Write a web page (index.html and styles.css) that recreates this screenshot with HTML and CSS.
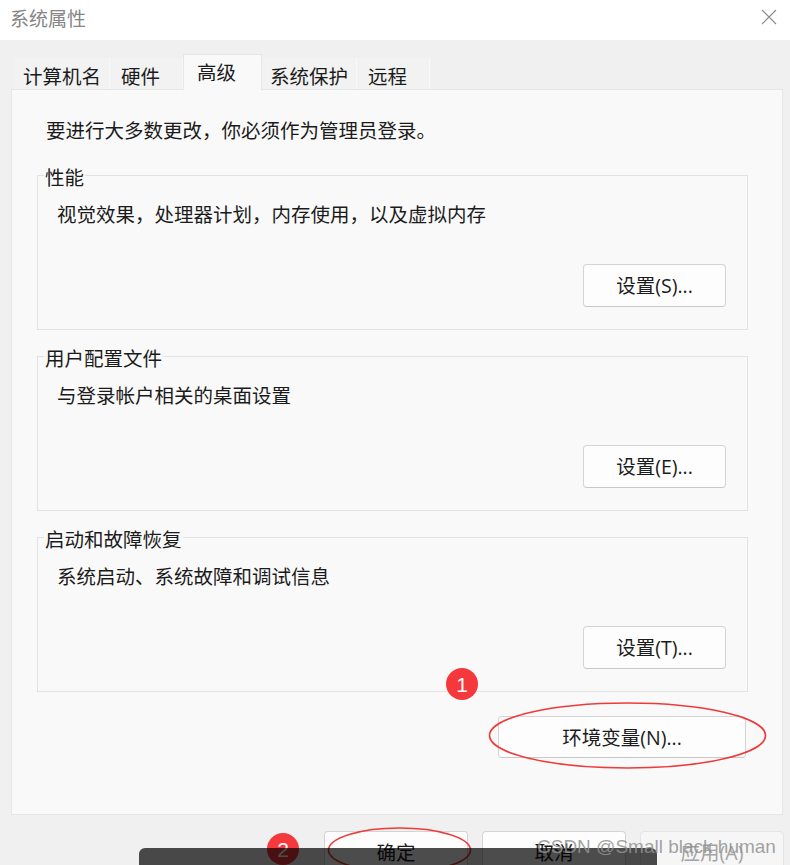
FILE: index.html
```html
<!DOCTYPE html>
<html lang="zh-CN">
<head>
    <meta charset="UTF-8">
    <meta name="viewport" content="width=device-width, initial-scale=1.0">
    <title>系统属性</title>
    <link rel="stylesheet" href="styles.css">
</head>
<body>
    <div class="window">
        <div class="titlebar">
            <span class="title">系统属性</span>
            <svg class="close" width="16" height="16" viewBox="0 0 16 16">
                <path d="M1 1 L15 15 M15 1 L1 15" stroke="#8a8a8a" stroke-width="1.1" fill="none"/>
            </svg>
        </div>

        <div class="tabs">
            <div class="tab">计算机名</div>
            <div class="tab">硬件</div>
            <div class="tab active">高级</div>
            <div class="tab">系统保护</div>
            <div class="tab">远程</div>
        </div>

        <div class="panel">
            <p class="intro">要进行大多数更改，你必须作为管理员登录。</p>

            <div class="groups">
                <fieldset class="group">
                    <legend>性能</legend>
                    <p class="desc">视觉效果，处理器计划，内存使用，以及虚拟内存</p>
                    <div class="actions"><button class="btn">设置(S)...</button></div>
                </fieldset>

                <fieldset class="group">
                    <legend>用户配置文件</legend>
                    <p class="desc">与登录帐户相关的桌面设置</p>
                    <div class="actions"><button class="btn">设置(E)...</button></div>
                </fieldset>

                <fieldset class="group">
                    <legend>启动和故障恢复</legend>
                    <p class="desc">系统启动、系统故障和调试信息</p>
                    <div class="actions"><button class="btn">设置(T)...</button></div>
                </fieldset>

                <div class="env-row">
                    <button class="btn btn-env">环境变量(N)...</button>
                </div>
            </div>
        </div>

        <div class="footer">
            <button class="btn btn-footer">确定</button>
            <button class="btn btn-footer">取消</button>
            <button class="btn btn-footer disabled">应用(A)</button>
        </div>
    </div>

    <!-- red annotations drawn over the dialog -->
    <svg class="marks" width="790" height="865" viewBox="0 0 790 865">
        <ellipse cx="627.5" cy="735.5" rx="138" ry="32.5" fill="none" stroke="#ef3a3a" stroke-width="1.6"/>
        <ellipse cx="399.5" cy="850" rx="71" ry="22" fill="none" stroke="#ef3a3a" stroke-width="1.6"/>
        <circle cx="462" cy="684" r="16" fill="#f5383b"/>
        <text x="462" y="691.5" class="badge-num">1</text>
        <circle cx="283" cy="849" r="16" fill="#f5383b"/>
        <text x="283" y="856.5" class="badge-num">2</text>
    </svg>

    <div class="shade"></div>
    <div class="watermark">CSDN @Small black human</div>
</body>
</html>
```

FILE: styles.css
```css
body {
    margin: 0;
    width: 790px;
    height: 865px;
    overflow: hidden;
    background-color: #f0f0f0;
    font-family: "Open Sans", "Noto Sans CJK SC", sans-serif;
    font-size: 19.5px;
    color: #1b1b1b;
    position: relative;
}

.titlebar {
    height: 40px;
    background-color: #ffffff;
    display: flex;
    align-items: center;
    justify-content: space-between;
    padding: 0 13px 0 10px;
    box-sizing: border-box;
}

.title {
    font-family: "Noto Sans CJK SC", sans-serif;
    font-size: 19px;
    color: #858585;
    line-height: 24px;
    margin-top: -5px;
}

.close {
    margin-top: -6px;
}

/* Tabs */
.tabs {
    display: flex;
    align-items: flex-end;
    height: 35px;
    margin-top: 14px;
    padding-left: 14px;
}

.tab {
    height: 31px;
    box-sizing: border-box;
    padding-top: 6px;
    line-height: 24px;
    background-color: #f2f2f2;
    border-right: 1px solid #f8f8f8;
    font-family: "Noto Sans CJK SC", sans-serif;
    white-space: nowrap;
}

.tab:nth-child(1) { width: 96px; padding-left: 9px; }
.tab:nth-child(2) { width: 73px; padding-left: 11px; }
.tab:nth-child(3) { width: 79px; padding-left: 13px; }
.tab:nth-child(4) { width: 95px; padding-left: 8px; }
.tab:nth-child(5) { width: 73px; padding-left: 11px; }

.tab.active {
    height: 36px;
    margin-bottom: -1px;
    background-color: #f9f9f9;
    border: 1px solid #e6e6e6;
    border-bottom: none;
    padding-top: 5px;
    position: relative;
    z-index: 1;
}

/* Panel */
.panel {
    margin: 0 7px 0 11px;
    height: 726px;
    box-sizing: border-box;
    background-color: #f9f9f9;
    border: 1px solid #e6e6e6;
}

.intro {
    margin: 28px 0 0 34px;
    line-height: 24px;
    font-family: "Noto Sans CJK SC", sans-serif;
}

.groups {
    margin: 19px 0 0 25px;
    width: 711px;
    display: flex;
    flex-direction: column;
    gap: 12px;
}

.group {
    margin: 0;
    padding: 0;
    border: 1px solid #e2e2e2;
    min-width: 0;
}

.group legend {
    padding: 4px 1px 0 1px;
    margin-left: 6px;
    line-height: 24px;
    font-family: "Noto Sans CJK SC", sans-serif;
}

.desc {
    margin: 13px 0 0 19px;
    line-height: 24px;
    font-family: "Noto Sans CJK SC", sans-serif;
}

.actions {
    display: flex;
    justify-content: flex-end;
    padding: 38px 21px 22px 0;
}

.btn {
    width: 143px;
    height: 43px;
    box-sizing: border-box;
    background-color: #fdfdfd;
    border: 1px solid #d4d4d4;
    border-bottom-color: #c8c8c8;
    border-radius: 4px;
    font-family: "Open Sans", "Noto Sans CJK SC", sans-serif;
    font-size: 19.5px;
    color: #1b1b1b;
    padding: 0 0 2px 0;
}

.env-row {
    display: flex;
    justify-content: flex-end;
    margin-top: 12px;
    padding-right: 2px;
}

.btn-env {
    width: 248px;
    height: 42px;
}

/* Bottom buttons */
.footer {
    display: flex;
    justify-content: flex-end;
    gap: 14px;
    margin-top: 16px;
    padding-right: 6px;
}

.btn-footer {
    width: 144px;
}

.btn-footer.disabled {
    background-color: #f6f6f6;
    border-color: #e4e4e4;
    color: #a3a3a3;
}

/* Overlays */
.marks {
    position: absolute;
    top: 0;
    left: 0;
    pointer-events: none;
}

.badge-num {
    font-family: "Liberation Sans", Arial, sans-serif;
    font-size: 21px;
    fill: #ffffff;
    text-anchor: middle;
}

.shade {
    position: absolute;
    left: 139px;
    top: 848px;
    width: 518px;
    height: 30px;
    background-color: rgba(0, 0, 0, 0.7);
    border-top-left-radius: 6px;
    border-top-right-radius: 6px;
}

.watermark {
    position: absolute;
    left: 537px;
    top: 836px;
    font-family: "Liberation Sans", Arial, sans-serif;
    font-size: 19px;
    color: rgba(145, 145, 145, 0.85);
    white-space: nowrap;
}
```
